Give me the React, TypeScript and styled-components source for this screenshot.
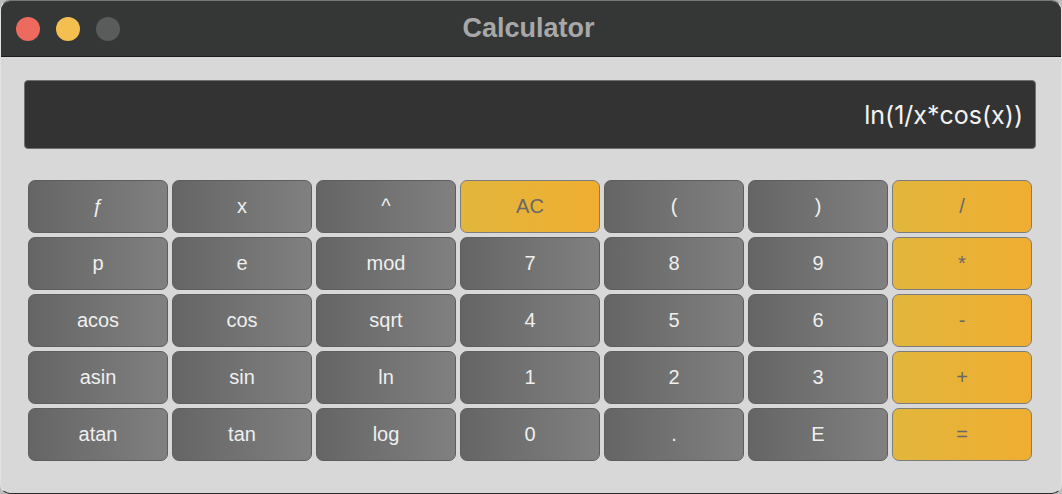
import React from "react";
import styled, { createGlobalStyle } from "styled-components";

const Global = createGlobalStyle`
  html, body { margin: 0; padding: 0; background: #bdbdbd; }
  body { font-family: "Liberation Sans", Arial, sans-serif; }
`;

const Window = styled.div`
  width: 1062px;
  height: 494px;
  box-sizing: border-box;
  border-radius: 10px;
  overflow: hidden;
  background: #d8d8d8;
  border: 1px solid #2a2a2a;
  border-top-color: #777;
  border-left-color: #e2e2e2;
  border-right-color: #e2e2e2;
  display: flex;
  flex-direction: column;
`;

const TitleBar = styled.div`
  height: 55px;
  flex: none;
  background: #353736;
  border-bottom: 1px solid #1c1c1c;
  display: flex;
  align-items: center;
  position: relative;
  padding-left: 15px;
  gap: 16px;
`;

const Light = styled.span<{ $c: string }>`
  width: 24px;
  height: 24px;
  border-radius: 50%;
  background: ${(p) => p.$c};
`;

const Title = styled.div`
  position: absolute;
  left: 0;
  right: 5px;
  top: 0;
  bottom: 0;
  display: flex;
  align-items: center;
  justify-content: center;
  font-weight: bold;
  font-size: 27px;
  color: #a8a8a8;
  pointer-events: none;
`;

const Body = styled.div`
  flex: 1;
  padding: 23px 25px 0 23px;
  display: flex;
  flex-direction: column;
`;

const Display = styled.div`
  height: 69px;
  box-sizing: border-box;
  background: #333333;
  border: 1.5px solid #707070;
  border-radius: 4px;
  display: flex;
  align-items: center;
  justify-content: flex-end;
  padding-right: 12px;
  padding-top: 1px;
  font-family: Inter, "Liberation Sans", sans-serif;
  font-size: 25px;
  color: #f2f2f2;
`;

const Grid = styled.div`
  margin: 31px 4px 0 4px;
  display: grid;
  grid-template-columns: repeat(7, 1fr);
  grid-auto-rows: 53px;
  column-gap: 4px;
  row-gap: 4px;
`;

const Key = styled.button<{ $op?: boolean }>`
  box-sizing: border-box;
  margin: 0;
  padding: 0;
  border-radius: 7px;
  border: 1.5px solid ${(p) => (p.$op ? "#7c7c7c" : "#5e5e5e")};
  background: ${(p) =>
    p.$op
      ? "linear-gradient(to right, #e2b63c, #efae31)"
      : "linear-gradient(to right, #656565, #808080)"};
  color: ${(p) => (p.$op ? "#686868" : "#efefef")};
  font-family: "Liberation Sans", Arial, sans-serif;
  font-size: 20px;
  display: flex;
  align-items: center;
  justify-content: center;
`;

const keys: [string, boolean][] = [
  ["ƒ", false], ["x", false], ["^", false], ["AC", true], ["(", false], [")", false], ["/", true],
  ["p", false], ["e", false], ["mod", false], ["7", false], ["8", false], ["9", false], ["*", true],
  ["acos", false], ["cos", false], ["sqrt", false], ["4", false], ["5", false], ["6", false], ["-", true],
  ["asin", false], ["sin", false], ["ln", false], ["1", false], ["2", false], ["3", false], ["+", true],
  ["atan", false], ["tan", false], ["log", false], ["0", false], [".", false], ["E", false], ["=", true],
];

export default function App() {
  return (
    <>
      <Global />
      <Window>
        <TitleBar>
          <Light $c="#ec6a5e" />
          <Light $c="#f4bf4f" />
          <Light $c="#5a5c5b" />
          <Title>Calculator</Title>
        </TitleBar>
        <Body>
          <Display>ln(1/x*cos(x))</Display>
          <Grid>
            {keys.map(([k, op], i) => (
              <Key key={i} $op={op}>
                {k}
              </Key>
            ))}
          </Grid>
        </Body>
      </Window>
    </>
  );
}
